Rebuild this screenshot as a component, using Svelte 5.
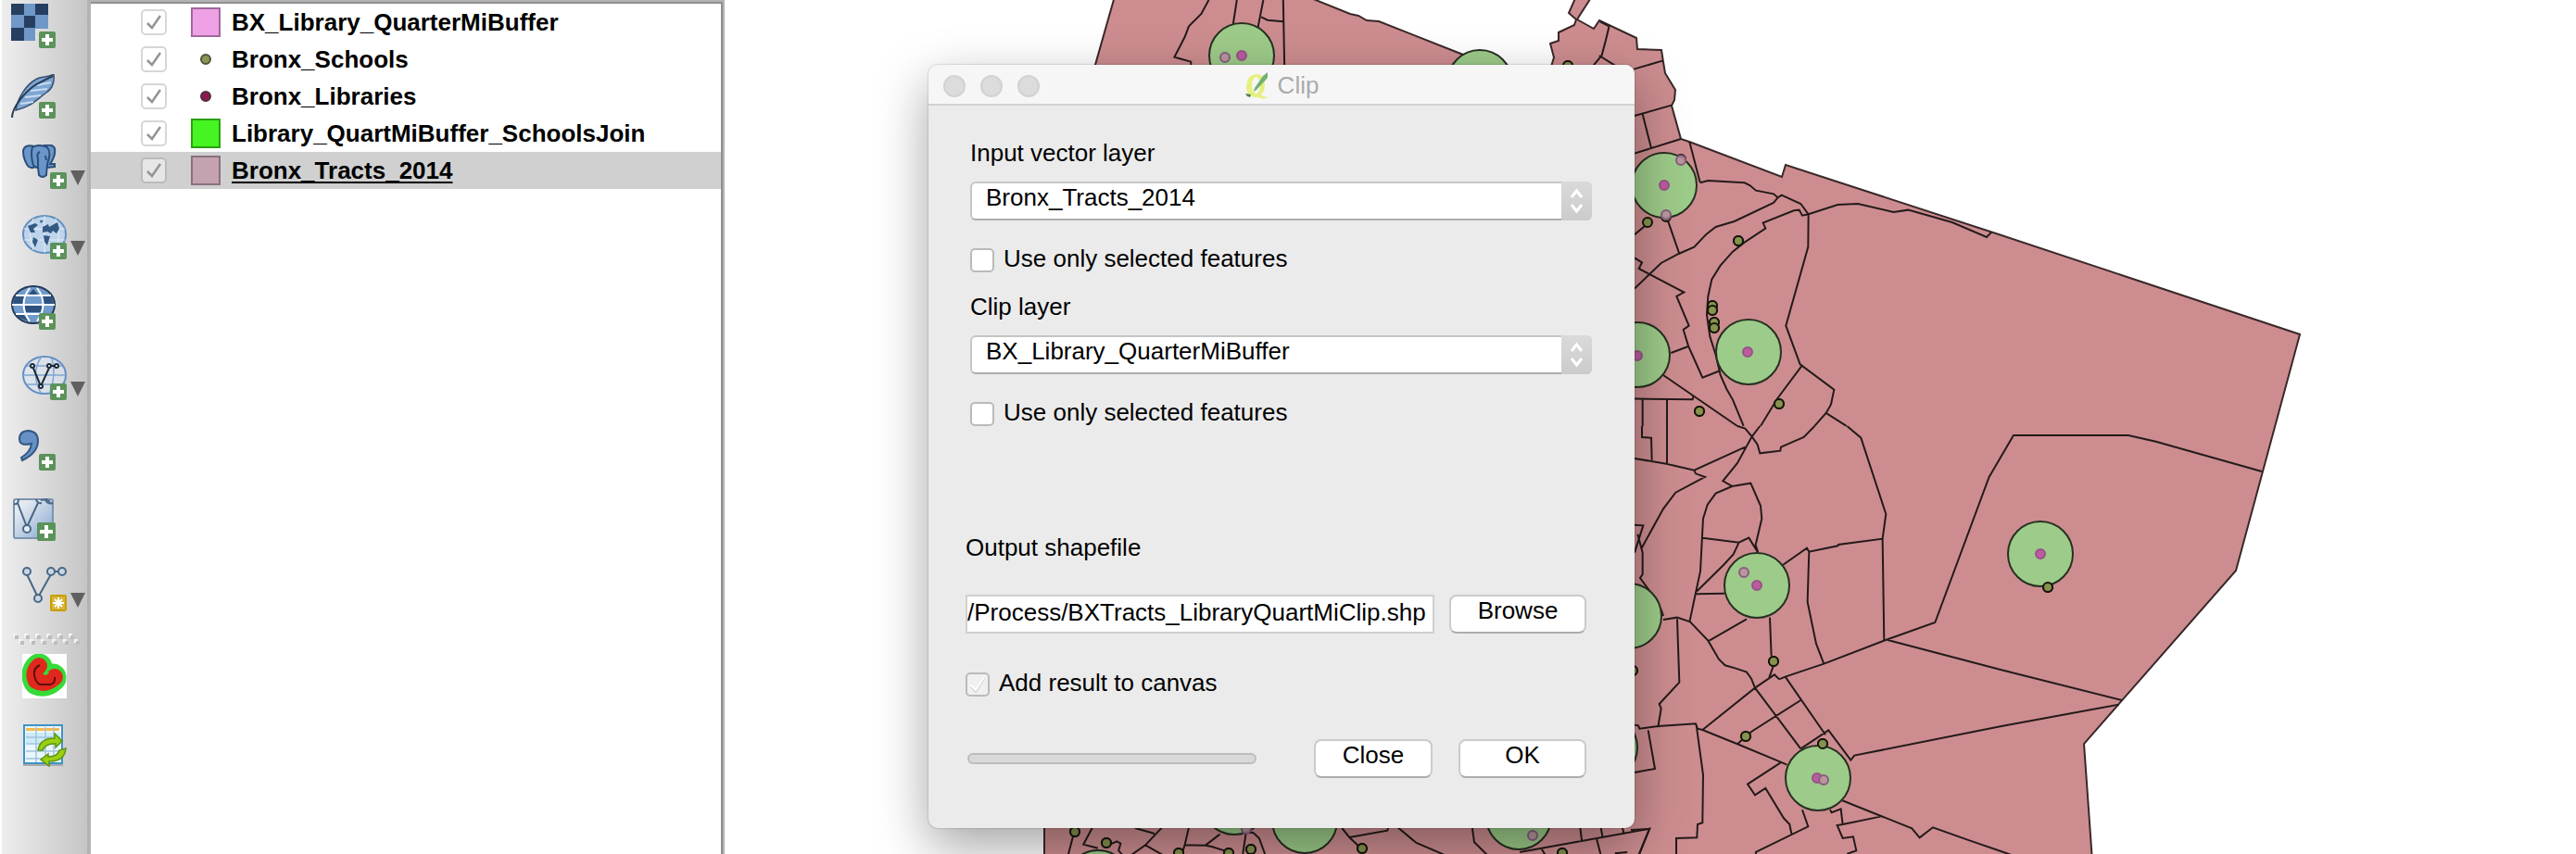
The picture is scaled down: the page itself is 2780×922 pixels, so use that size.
<script>
  const layers = [
    { name: 'BX_Library_QuarterMiBuffer', kind: 'fill', color: '#eea2e5', edge: '#a0689a' },
    { name: 'Bronx_Schools', kind: 'dot', color: '#8a9456', edge: '#50553c' },
    { name: 'Bronx_Libraries', kind: 'dot', color: '#8b1a4b', edge: '#50303c' },
    { name: 'Library_QuartMiBuffer_SchoolsJoin', kind: 'fill', color: '#45f421', edge: '#2ba012' },
    { name: 'Bronx_Tracts_2014', kind: 'fill', color: '#c4a2b0', edge: '#8a7080', selected: true }
  ];

  const tools = [
    { id: 'raster', label: 'Add raster layer' },
    { id: 'feather', label: 'Add SpatiaLite layer' },
    { id: 'postgis', label: 'Add PostGIS layer', menu: true },
    { id: 'wms', label: 'Add WMS layer', menu: true },
    { id: 'wcs', label: 'Add WCS layer' },
    { id: 'wfs', label: 'Add WFS layer', menu: true },
    { id: 'csv', label: 'Add delimited text layer' },
    { id: 'virtual', label: 'Add vector layer' },
    { id: 'new', label: 'New shapefile layer', menu: true }
  ];

  const land =
    'M1203-4 1182 70 1127 850 1127 930 2258 930 2249 803 2413 616 2482 361 2160 254 1927 178 1923 191 1823 153 1814 150 1804 114 1807 108 1808 97 1797 79 1795 67 1793 54 1767 53 1766 41 1726 22 1720 31 1702 21 1718-4 1701-4 1693 14 1701 21 1699 27 1682 35 1682 44 1673 47 1677 62 1673 75 1605 75 1579 59 1488 23 1475 22 1466 17 1457 15 1410-4';

  const tracts = [
    {
      frame: 'translate(1760 0) scale(.3333)',
      d: 'M190 460 224 590M224 592 250 585 368 592 385 600 405 617 462 628 476 640 488 632 550 660 575 694M476 640 462 657 335 717 275 735 245 758 205 800 155 822 98 852 12 935M575 694 555 698 545 680 528 682 428 722 436 740 368 785 330 815 290 860 262 905 250 960 246 1020 256 1090 275 1150 290 1215 310 1260 330 1295 365 1380M575 694 670 663 735 660 850 687 898 680 1040 720 1152 768 1168 752M575 694 574 800 502 1055 548 1180 658 1262 648 1310 632 1338 595 1380M632 1338 698 1380M556 1182 475 1290 420 1380M120 715 157 822M12 497 162 450M38 370 66 480M12 375 132 341M10 224 102 197M12 760 50 728M12 835 36 850 26 870 58 887 172 947 148 960 188 1055 170 1068 186 1120 232 1223 290 1200M130 1143 186 1122M105 1215 345 1380M12 1292 200 1294 203 1280M38 1292V1380M117 1292V1380'
    },
    {
      frame: 'translate(1760 460) scale(.3333)',
      d: 'M36 0V36L66 38 68 110M117 0V122M12 105 115 122 205 143 370 68M345 0 370 8 392 34 410 60 418 88 484 80 486 68 560 36 595 0M418 0 392 34 345 120 298 178 328 195 388 185 420 258 424 300 404 385 412 410M205 143 210 154 240 165 145 215 105 268 35 395M12 320 40 322 12 410M22 350 38 410 38 480 30 492 80 560 100 600 105 615M328 195 275 218 248 255 234 300 225 470 210 540 190 635M232 362 350 377 382 362 412 410M350 377 332 415 300 450 214 535M212 544 304 542M105 627 150 620 192 634 250 695 285 755 305 775 340 785 375 797 390 818 402 848 550 1045M250 697 375 625M450 620 455 745M461 778 448 815M492 450 570 395 577 407 670 388 672 384 815 365 826 285 745 38 700 0M577 407 572 570 600 705 625 770M815 365 820 695M480 820 500 812 625 770 825 693 985 636 1160 165 1239 30 1611 30 1700 50 2043 147M832 693 1200 790 1590 888M150 625 157 830 92 900 98 915 88 975M12 968 24 970 28 980 88 972 210 964 216 980 232 984 345 1030 490 1090 505 1097M232 984 402 848 465 805 480 820M500 812 630 1000M345 1030 390 990 550 888M550 1045 640 985 712 1082 724 1067 1200 972 1580 902M212 968 234 1130 232 1285 216 1290 214 1333 147 1335V1390M56 985 78 1110 12 1122M0 1308 60 1305 25 1390M485 1090 378 1160 402 1195 436 1173 495 1270 514 1290 520 1320M555 1243 574 1297 405 1380V1390M645 1243 650 1252 680 1240 686 1290 808 1265M686 1290 668 1293 686 1335 720 1330 730 1375 700 1386M685 1213 910 1303 935 1333 978 1300 1090 1340 1200 1378 1240 1392'
    },
    {
      frame: 'translate(1100 0) scale(.4464 .3333)',
      d: 'M458 0 440 45 410 85 400 120 375 185 415 200V212M526 0 517 78M590 0 577 88M585 55 600 65 638 70M638 0 641 212M1426 85 1418 130 1408 180 1388 212M1402 180 1440 212M1426 85 1404 70'
    },
    {
      frame: 'translate(1100 880) scale(.4464 .3333)',
      d: 'M177 40 155 95 190 107M130 68 118 130M210 100 236 85 245 92 240 115 250 130M280 42 327 60M345 40 305 97 270 130M305 97 348 130M410 40 400 97 450 98 485 62M400 97 392 130M450 98 465 102 496 115M548 58 540 130M548 58 565 56 580 75 595 130M780 42 798 72 820 100M798 72 890 50 892 40M915 40 960 90 1030 130M1095 40 1100 88 1132 130M1210 120 1524 44 1498 130M1356 40 1360 84M1406 40 1410 70M1458 40 1462 62M1396 78 1406 130M1262 108 1272 130M1440 124 1470 120'
    }
  ];

  const buffers = [
    [1340, 60], [1597, 89], [1796, 200], [1767, 383], [1887, 380], [1896, 632], [1758, 665],
    [1962, 840], [1732, 807], [2202, 598], [1408, 886], [1639, 882], [1332, 866], [1185, 953]
  ];
  const schools = [
    [1778, 240], [1798, 234], [1876, 260], [1848, 330], [1848, 335], [1850, 348], [1850, 354],
    [1920, 436], [1834, 444], [1914, 714], [1884, 795], [1967, 803], [1762, 724], [2210, 634],
    [1692, 71], [1160, 898], [1194, 910], [1272, 921], [1326, 921], [1350, 917], [1470, 916],
    [1686, 921], [1814, 172]
  ];
  const libraries = [[1340, 60], [1796, 200], [1767, 384], [1886, 380], [1896, 632], [1961, 840], [2202, 598]];
  const covered = [[1322, 62], [1814, 173], [1798, 232], [1882, 618], [1968, 842], [1654, 902], [1345, 895]];

  const layerNames = layers.map((l) => l.name);
  let inputLayer = $state('Bronx_Tracts_2014');
  let clipLayer = $state('BX_Library_QuarterMiBuffer');
  let output = $state('/Process/BXTracts_LibraryQuartMiClip.shp');
</script>

{#snippet badge(x, y, s = 18)}
  <rect {x} {y} width={s} height={s} rx="2" fill="#5b935b" />
  <path d="M{x + s / 2} {y + 3}v{s - 6}M{x + 3} {y + s / 2}h{s - 6}" stroke="#fff" stroke-width="4" />
{/snippet}

{#snippet stepper()}
  <svg class="stepper" viewBox="0 0 33 42" aria-hidden="true">
    <path d="M11 17 16.500 10 22 17M11 25 16.500 32 22 25" fill="none" stroke="#fff" stroke-width="3" />
  </svg>
{/snippet}

<div class="app">
  <nav class="toolbar" aria-label="Manage layers">
    {#each tools as tool}
      <button class="tool" class:menu={tool.menu} aria-label={tool.label}>
        <svg viewBox="0 0 48 48" aria-hidden="true">
          {#if tool.id === 'raster'}
            <path d="M0 0h40v27H26v13H0z" fill="#6f98c8" />
            <path d="M0 0h14v12H0zM26 0h14v12H26zM14 13h12v13H14zM0 26h14v14H0z" fill="#263f60" />
            {@render badge(30, 30)}
          {:else if tool.id === 'feather'}
            <path d="M5 39C7 26 16 11 28 5 34 2 40 4 46 0 47 9 44 16 38 20 28 27 22 35 5 39Z" fill="#7fa6d3" stroke="#34506f" stroke-width="1.500" />
            <path d="M10 32 24 30M15 25 32 23M21 18 39 16M28 12 43 9" stroke="#c9dcef" stroke-width="2" />
            <path d="M1 47C1 36 14 20 27 11L45 2" fill="none" stroke="#263c52" stroke-width="2" />
            {@render badge(30, 30)}
          {:else if tool.id === 'postgis'}
            <path d="M24 1Q32-1 35 4C36 10 33 17 30 21H35V24L27 25Z" fill="#6b96ca" stroke="#2b4f79" stroke-width="2" />
            <path d="M13 2C6 0 1 2 1 8 1 14 4 21 7 24Q12 27 15 22Z" fill="#6b96ca" stroke="#2b4f79" stroke-width="2" />
            <path d="M11 3Q18-1 27 3C31 8 29 16 27 21L26 33Q22 37 18 33L17 25Q12 25 11 19 9 9 11 3Z" fill="#6b96ca" stroke="#2b4f79" stroke-width="2" />
            <path d="M17 25V15Q15 10 19 8M25 12 26 17" fill="none" stroke="#2b4f79" stroke-width="2" />
            {@render badge(30, 30)}
          {:else if tool.id === 'wms'}
            <ellipse cx="24" cy="21" rx="23" ry="20" fill="#bdd4ea" stroke="#6390c3" stroke-width="2" />
            <path d="M2 15H46M2 27H46M24 1V41M12 4Q5 20 12 38M36 4Q43 20 36 38" fill="none" stroke="#e3edf7" />
            <path d="M6 12 14 9 17 11 12 15 14 19 9 19ZM12 24 17 27 14 35 11 29ZM22 13 28 10 29 13 38 8 40 15 37 20 33 17 31 20 27 18 22 19ZM23 22 30 23 27 33 24 29ZM19 6 23 6 20 9Z" fill="#345a84" />
            {@render badge(30, 30)}
          {:else if tool.id === 'wcs'}
            <ellipse cx="24" cy="21" rx="23" ry="20" fill="#719bcc" stroke="#243a58" stroke-width="2" />
            <path d="M18 11 24 4 30 11ZM4 12H14V21H2ZM34 12H44L46 21H34ZM15 21H33V29H15ZM5 31H13L19 39 9 35Z" fill="#2d5280" />
            <path d="M5 11H43M1 21H47M5 31H43M20 3Q7 20 20 39M28 3Q41 20 28 39" fill="none" stroke="#fff" stroke-width="2" />
            {@render badge(30, 30)}
          {:else if tool.id === 'wfs'}
            <ellipse cx="24" cy="21" rx="23" ry="20" fill="#dce6f1" fill-opacity=".6" stroke="#6390c3" stroke-width="2" />
            <path d="M5 11H43M1 21H47M5 31H43M20 2Q9 20 20 40M32 3Q37 20 30 39" fill="none" stroke="#7fa5d2" stroke-width="1.500" />
            <path d="M11 11 20 33 30 11H37" fill="none" stroke="#1c2a3a" stroke-width="2" />
            <g fill="#fff" stroke="#1c2a3a" stroke-width="2"><circle cx="11" cy="11" r="2" /><circle cx="20" cy="33" r="2" /><circle cx="29" cy="11" r="2" /><circle cx="37" cy="11" r="2" /></g>
            {@render badge(30, 30)}
          {:else if tool.id === 'csv'}
            <path d="M9 14Q9 5 19 5 29 6 29 16 29 29 12 37L11 34Q21 28 22 19 9 22 9 14Z" fill="#6791c4" stroke="#315783" stroke-width="2" />
            {@render badge(30, 30)}
          {:else if tool.id === 'virtual'}
            <defs><linearGradient id="sheet" x2="1" y2="1"><stop offset=".2" stop-color="#e4eaf1" /><stop offset="1" stop-color="#84a6d0" /></linearGradient></defs>
            <rect x="3" y="3" width="42" height="42" rx="2" fill="url(#sheet)" stroke="#7c93ad" stroke-width="2" />
            <path d="M7 7 17 33 29 7M32 4 38 3 42 6" fill="none" stroke="#4a6785" stroke-width="2" />
            <g fill="#e8eef5" stroke="#4a6785" stroke-width="2"><circle cx="17" cy="35" r="4" /><path d="M3 8Q8 9 8 3M27 3Q28 8 33 7M37 4Q40 9 45 7" fill="none" /></g>
            {@render badge(28, 28, 20)}
          {:else}
            <path d="M5 8 17 33 31 8M31 5H43" fill="none" stroke="#4a6785" stroke-width="2" />
            <g fill="#c9d6e5" stroke="#4a6785" stroke-width="2"><circle cx="5" cy="5" r="4" /><circle cx="17" cy="34" r="4" /><circle cx="31" cy="5" r="4" /><circle cx="43" cy="5" r="4" /></g>
            <rect x="31" y="31" width="16" height="16" rx="1" fill="#d9b43a" stroke="#c6a000" stroke-width="2" />
            <path d="M39 33V45M33 39H45M35 35 43 43M43 35 35 43" stroke="#fff" stroke-width="2" />
          {/if}
        </svg>
        {#if tool.menu}<svg class="caret" viewBox="0 0 16 16" aria-hidden="true"><path d="M0 0H16L8 16Z" fill="#606060" /></svg>{/if}
      </button>
    {/each}
    <svg class="grip" viewBox="0 0 72 12" aria-hidden="true">
      {#each [0, 1, 2, 3, 4, 5] as i}
        <path d="M{i * 12} 0h4v4h-4zM{i * 12 + 6} 6h4v4h-4z" fill="#f4f4f4" />
        <path d="M{i * 12 + 2} 2h4v4h-4zM{i * 12 + 8} 8h4v4h-4z" fill="#bdbdbd" />
      {/each}
    </svg>
    <button class="tool menu" aria-label="Multi ring buffer">
      <svg viewBox="0 0 48 48" aria-hidden="true">
        <rect width="48" height="48" fill="#fff" />
        <path d="M18 14Q11 21 16 30 25 34 33 26V25" fill="none" stroke="#35dc38" stroke-width="29" stroke-linecap="round" stroke-linejoin="round" />
        <path d="M18 13Q11 20 15 29 25 34 35 25" fill="none" stroke="#e0281c" stroke-width="18" stroke-linecap="round" stroke-linejoin="round" />
        <path d="M22 22 26 17 29 20 26 23Z" fill="#35dc38" />
        <path d="M19 12Q12 15 13 23 14 30 19 33H30Q36 32 35 25" fill="none" stroke="#5d0d0b" stroke-width="2" />
      </svg>
    </button>
    <button class="tool menu" aria-label="Refresh attribute table">
      <svg viewBox="0 0 48 48" aria-hidden="true">
        <path d="M1 43H44V45H1Z" fill="#aaa" />
        <rect x="2" y="1" width="41" height="41" fill="#eaf7fd" stroke="#3d94c4" stroke-width="2" />
        <path d="M4 4H40V7H4Z" fill="#f8b94c" />
        <path d="M4 9H41V20H4Z" fill="#cdebf9" />
        <path d="M4 14H41M4 21H41M4 29H41M4 37H41M15 3V41M25 3V41M34 3V41" stroke="#a3c3dc" stroke-width="1.500" />
        <path d="M17 28Q19 15 35 15V10L43 18 36 25V21Q25 20 22 28ZM47 26Q46 40 29 40V45L20 38 28 32V35Q38 35 40 28Z" fill="#9bd012" stroke="#5b9412" stroke-width="1.500" />
      </svg>
    </button>
  </nav>

  <aside class="layers" aria-label="Layers">
    <ul>
      {#each layers as layer}
        <li class:selected={layer.selected}>
          <label>
            <input class="visible" type="checkbox" checked />
            <span class="swatch {layer.kind}" style="background:{layer.color};border-color:{layer.edge}"></span>
            <span class="name">{layer.name}</span>
          </label>
        </li>
      {/each}
    </ul>
  </aside>

  <main class="canvas">
    <svg class="map" viewBox="782 0 1998 922" preserveAspectRatio="xMinYMin slice" aria-label="Map of Bronx tracts">
      <path class="land" d={land} />
      {#each tracts as t}
        <g transform={t.frame}><path class="tract" d={t.d} /></g>
      {/each}
      {#each schools as [x, y]}<circle class="school" cx={x} cy={y} r="5" />{/each}
      {#each buffers as [x, y]}<circle class="buffer" cx={x} cy={y} r="35" />{/each}
      {#each schools.slice(2, -1) as [x, y]}<circle class="school" cx={x} cy={y} r="5" />{/each}
      {#each libraries as [x, y]}<circle class="library" cx={x} cy={y} r="5" />{/each}
      {#each covered as [x, y]}<circle class="covered" cx={x} cy={y} r="5" />{/each}
    </svg>

    <div class="dialog" role="dialog" aria-labelledby="clip-title">
      <header>
        <div class="lights"><button aria-label="Close window"></button><button aria-label="Minimize"></button><button aria-label="Zoom"></button></div>
        <h1 id="clip-title">
          <svg viewBox="0 0 26 32" aria-hidden="true">
            <path fill-rule="evenodd" d="M12 3Q22 3 22 14 22 22 18 25 20 29 25 27 23 32 15 28 2 29 2 16 3 4 12 3ZM12 6Q8 8 8 16 9 24 13 24 17 22 17 14 16 6 12 6Z" fill="#e6f07f" />
            <path d="M25 1 20 5 11 18 10 22 13 20 25 7Z" fill="#74b074" />
            <path d="M1 24 7 25 6 28 3 27Z" fill="#507a55" />
          </svg>
          Clip
        </h1>
      </header>
      <form onsubmit={(e) => e.preventDefault()}>
        <div class="inputs">
          <label class="caption" for="input-layer">Input vector layer</label>
          <div class="combo">
            <select id="input-layer" bind:value={inputLayer}>
              {#each layerNames as n}<option>{n}</option>{/each}
            </select>
            {@render stepper()}
          </div>
          <label class="check"><input type="checkbox" />Use only selected features</label>
          <label class="caption" for="clip-layer">Clip layer</label>
          <div class="combo">
            <select id="clip-layer" bind:value={clipLayer}>
              {#each layerNames as n}<option>{n}</option>{/each}
            </select>
            {@render stepper()}
          </div>
          <label class="check"><input type="checkbox" />Use only selected features</label>
        </div>
        <div class="outputs">
          <label for="output">Output shapefile</label>
          <div class="file">
            <input id="output" type="text" bind:value={output} />
            <button class="push browse" type="button">Browse</button>
          </div>
          <label class="check"><input class="dim" type="checkbox" checked />Add result to canvas</label>
          <div class="actions">
            <div class="progress" role="progressbar" aria-label="Progress" aria-valuenow="0"></div>
            <button class="push close" type="button">Close</button>
            <button class="push ok" type="submit">OK</button>
          </div>
        </div>
      </form>
    </div>
  </main>
</div>

<style>
  :global(body) { margin: 0; }
  .app, .app * { box-sizing: border-box; }
  .app {
    display: flex;
    min-height: 100vh;
    overflow: hidden;
    background: #fff;
    color: #000;
    font: 26px/30px "Liberation Sans", Arial, sans-serif;
  }
  button, input, select { font: inherit; color: inherit; margin: 0; }

  .toolbar {
    display: flex;
    flex-direction: column;
    flex: none;
    align-items: flex-start;
    gap: 28px;
    width: 94px;
    padding: 4px 0 0 10px;
    border-left: 2px solid #fff;
    background: linear-gradient(90deg, #eee, #dadada 50%, #c5c5c5);
  }
  .tool {
    display: flex;
    gap: 4px;
    height: 48px;
    padding: 0;
    border: 0;
    background: none;
  }
  .tool.menu { padding-left: 12px; }
  .tool svg { width: 48px; height: 48px; flex: none; }
  .tool .caret { width: 16px; height: 16px; margin-top: 28px; }
  .grip { width: 72px; height: 12px; margin: -4px 0 -18px 2px; }

  .layers {
    flex: none;
    width: 688px;
    border: solid #b3b3b3;
    border-width: 2px 2px 0 4px;
  }
  ul {
    height: 100%;
    margin: 0;
    padding: 0;
    list-style: none;
    border-top: 2px solid #8f8f8f;
    border-right: 2px solid #8f8f8f;
  }
  li label {
    display: flex;
    align-items: center;
    height: 40px;
    padding-left: 54px;
  }
  .selected { background: #d0d0d0; }
  .visible {
    appearance: none;
    width: 28px;
    height: 28px;
    margin-right: 26px;
    border: 2px solid #d6d6d6;
    border-radius: 5px;
    background: url("data:image/svg+xml,%3Csvg xmlns='http://www.w3.org/2000/svg' viewBox='0 0 24 24'%3E%3Cpath d='M5 13 10 18 19 5' fill='none' stroke='%23949494' stroke-width='2.500'/%3E%3C/svg%3E") center / 24px no-repeat;
  }
  .selected .visible { background-color: #e6e6e6; border-color: #bbb; }
  .swatch { flex: none; width: 32px; height: 32px; margin-right: 12px; border: 2px solid; }
  .swatch.dot { width: 12px; height: 12px; margin: 0 22px 0 10px; border-radius: 50%; }
  .name { font-weight: 700; }
  .selected .name { text-decoration: underline; text-decoration-thickness: 2px; text-underline-offset: 3px; text-decoration-skip-ink: none; }

  .canvas { position: relative; flex: 1; min-width: 0; overflow: hidden; }
  .map { position: absolute; inset: 0; width: 100%; height: 100%; }
  .land { fill: #cd8d90; stroke: #3a2829; stroke-width: 2; }
  .tract { fill: none; stroke: #241a1a; stroke-width: 2; vector-effect: non-scaling-stroke; }
  .buffer { fill: #9dcb89; stroke: #263021; stroke-width: 2; }
  .school { fill: #88924f; stroke: #14160a; stroke-width: 2; }
  .library { fill: #bb5c9d; stroke: #98528a; stroke-width: 2; }
  .covered { fill: #bb92a0; fill-opacity: .9; stroke: #8a5c82; stroke-width: 2; }

  .dialog {
    position: absolute;
    left: 220px;
    top: 70px;
    width: 762px;
    border-radius: 10px;
    background: #ebebeb;
    box-shadow: 0 0 2px rgba(0, 0, 0, .35), 0 20px 56px rgba(0, 0, 0, .36);
  }
  header {
    display: flex;
    align-items: center;
    height: 44px;
    padding: 4px 16px 0;
    border-bottom: 2px solid #d1d1d1;
    border-radius: 10px 10px 0 0;
    background: #f6f6f6;
  }
  .lights { display: flex; flex: 1; gap: 16px; }
  .lights button { width: 24px; height: 24px; padding: 0; border: 2px solid #d2d2d2; border-radius: 50%; background: #dcdcdc; }
  h1 { display: flex; gap: 10px; margin: 0; font-size: 26px; font-weight: 400; color: #aaa; }
  h1 svg { width: 26px; height: 32px; }
  header::after { content: ""; flex: 1; }

  form { padding: 36px 0 54px; }
  .inputs { padding: 0 46px 0 45px; }
  .caption { display: block; margin-bottom: 16px; }
  .combo { position: relative; height: 42px; margin-bottom: 26px; }
  select {
    appearance: none;
    width: 100%;
    height: 42px;
    padding: 0 40px 8px 15px;
    border: 2px solid #c6c6c6;
    border-bottom-color: #adadad;
    border-radius: 6px;
    background: #fff;
  }
  .stepper {
    position: absolute;
    top: 0;
    right: 0;
    width: 33px;
    height: 42px;
    border-radius: 0 6px 6px 0;
    background: linear-gradient(#dadada, #cbcbcb);
    pointer-events: none;
  }
  .check { display: flex; align-items: flex-start; gap: 10px; margin-bottom: 22px; }
  .check input {
    appearance: none;
    width: 26px;
    height: 26px;
    margin-top: 4px;
    border: 2px solid #bababa;
    border-radius: 5px;
    background: #fff;
  }
  .check .dim {
    background: #f0f0f0 url("data:image/svg+xml,%3Csvg xmlns='http://www.w3.org/2000/svg' viewBox='0 0 22 22'%3E%3Cpath d='M4 13 9 18 18 4' fill='none' stroke='%23d2d2d2' stroke-width='3'/%3E%3Cpath d='M4 12 9 17 18 3' fill='none' stroke='%23fff' stroke-width='2'/%3E%3C/svg%3E") center / 22px no-repeat;
  }
  .outputs { padding: 94px 52px 0 40px; }
  .file { display: flex; gap: 16px; margin: 36px 0 38px; }
  .file input {
    flex: 1;
    min-width: 0;
    height: 42px;
    padding: 0 0 4px;
    border: 2px solid #d0d0d0;
    background: #fff;
  }
  .push {
    height: 42px;
    padding: 0 0 8px;
    border: 2px solid #cbcbcb;
    border-bottom-color: #adadad;
    border-radius: 8px;
    background: #fff;
  }
  .browse { width: 148px; }
  .outputs .check { margin-bottom: 46px; }
  .actions { display: flex; align-items: center; }
  .progress {
    flex: 1;
    height: 12px;
    margin: 0 62px 0 2px;
    border: 2px solid #bdbdbd;
    border-radius: 6px;
    background: #d9d9d9;
  }
  .close { width: 128px; margin-right: 28px; }
  .ok { width: 138px; }
</style>
